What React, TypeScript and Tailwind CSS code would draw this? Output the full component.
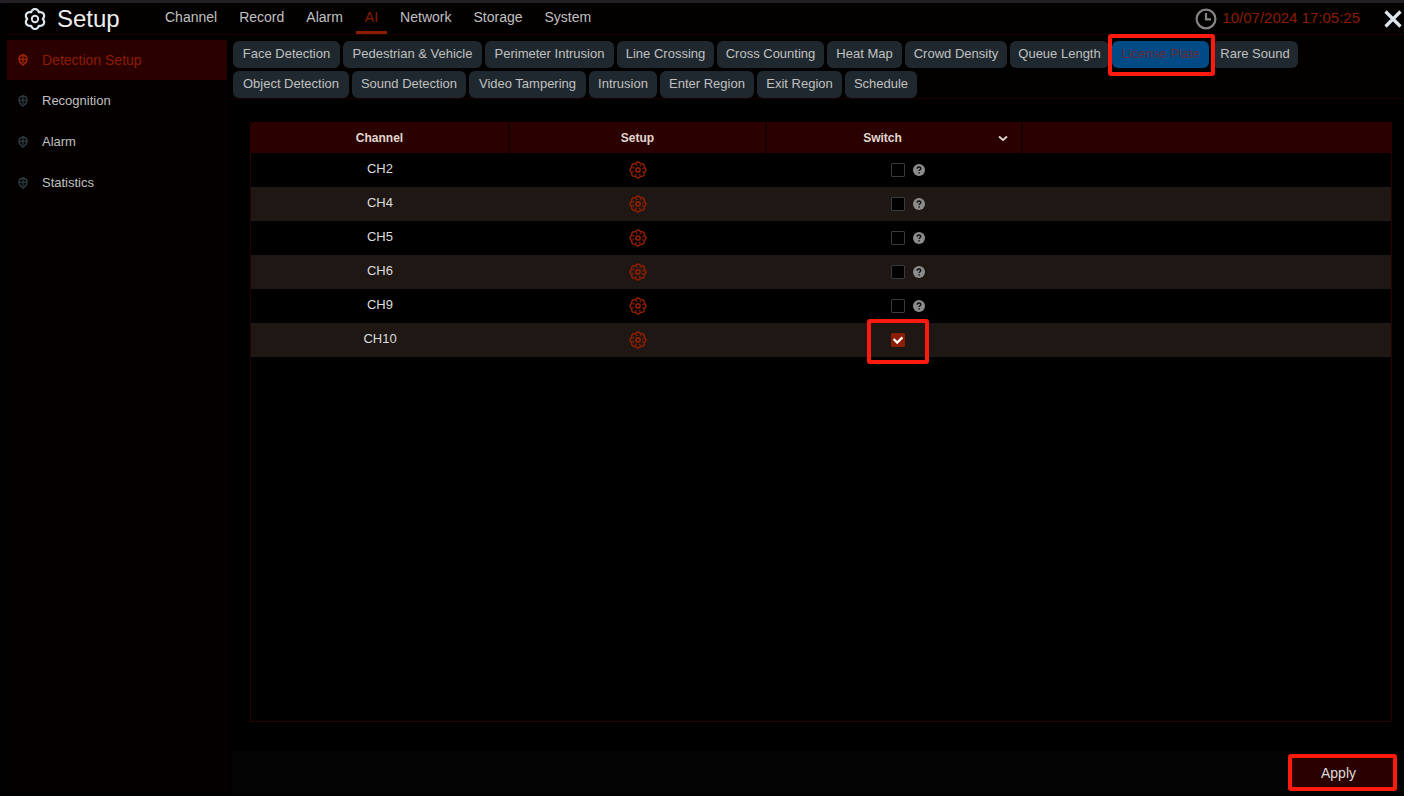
import { useState } from 'react'

const NAV = ['Channel', 'Record', 'Alarm', 'AI', 'Network', 'Storage', 'System']
const SIDEBAR = ['Detection Setup', 'Recognition', 'Alarm', 'Statistics']

const TABS = [
  [
    { name: 'Face Detection', width: 'w-[107px]' },
    { name: 'Pedestrian & Vehicle', width: 'w-[139px]' },
    { name: 'Perimeter Intrusion', width: 'w-[129px]' },
    { name: 'Line Crossing', width: 'w-[97px]' },
    { name: 'Cross Counting', width: 'w-[107px]' },
    { name: 'Heat Map', width: 'w-[75px]' },
    { name: 'Crowd Density', width: 'w-[102px]' },
    { name: 'Queue Length', width: 'w-[99px]' },
    { name: 'License Plate', width: 'w-[97px]' },
    { name: 'Rare Sound', width: 'w-[86px]' },
  ],
  [
    { name: 'Object Detection', width: 'w-[116px]' },
    { name: 'Sound Detection', width: 'w-[114px]' },
    { name: 'Video Tampering', width: 'w-[117px]' },
    { name: 'Intrusion', width: 'w-[68px]' },
    { name: 'Enter Region', width: 'w-[94px]' },
    { name: 'Exit Region', width: 'w-[85px]' },
    { name: 'Schedule', width: 'w-[72px]' },
  ],
]

const CHANNELS = ['CH2', 'CH4', 'CH5', 'CH6', 'CH9', 'CH10']

// closed outline with n rounded lobes and narrow notches between them
function lobes(c: number, r: number, depth: number, n: number) {
  const points = Array.from({ length: 96 }, (_, i) => {
    const t = (i / 96) * Math.PI * 2
    const d = r + depth * Math.abs(Math.cos((n * t) / 2))
    return `${(c + d * Math.sin(t)).toFixed(2)} ${(c - d * Math.cos(t)).toFixed(2)}`
  })
  return `M${points.join('L')}Z`
}

function SetupIcon() {
  return (
    <svg viewBox="0 0 24 24" className="size-6" fill="none" stroke="#dbe6ee" aria-hidden="true">
      <path d={lobes(12, 7.8, 2.2, 6)} strokeWidth="2.2" strokeLinejoin="round" />
      <circle cx="12" cy="12" r="3.2" strokeWidth="1.9" />
    </svg>
  )
}

function GearIcon() {
  return (
    <svg viewBox="0 0 18 18" className="size-[18px]" fill="none" stroke="currentColor" aria-hidden="true">
      <path d={lobes(9, 6.7, 1.2, 8)} strokeWidth="1.6" strokeLinejoin="round" />
      <circle cx="9" cy="9" r="5.1" strokeWidth="1.4" strokeDasharray="1.6 2.405" strokeDashoffset="2.8" />
      <circle cx="9" cy="9" r="2.1" strokeWidth="1.7" />
    </svg>
  )
}

function PinIcon() {
  return (
    <svg viewBox="0 0 10 12" className="h-3 w-[10px]" fill="none" stroke="currentColor" aria-hidden="true">
      <path d="M5 .8 8.2 2.3 9.1 5 8.2 8 5 11 1.8 8 .9 5 1.8 2.3Z" strokeWidth="1.5" />
      <path d="M5 2v7M2 5.4h6" strokeWidth="1.3" />
    </svg>
  )
}

function ClockIcon() {
  return (
    <svg viewBox="0 0 22 22" className="size-[22px]" fill="none" stroke="#858585" strokeWidth="2.2" aria-hidden="true">
      <circle cx="11" cy="11" r="9.4" />
      <path d="M11 5v6.4h5" />
    </svg>
  )
}

function HelpIcon() {
  return (
    <svg viewBox="0 0 12 12" className="size-3" aria-hidden="true">
      <circle cx="6" cy="6" r="6" fill="#8c8c8c" />
      <path d="M4.2 4.7C4.2 2.4 7.9 2.5 7.8 4.6 7.7 5.8 6.2 5.7 6.1 7" fill="none" stroke="#111" strokeWidth="1.4" />
      <circle cx="6.1" cy="8.9" r=".8" fill="#111" />
    </svg>
  )
}

// red frame drawn around the highlighted controls
function Frame({ className }: { className: string }) {
  return <span className={`pointer-events-none absolute z-10 rounded-[3px] border-4 border-[#ff1a0f] ${className}`} />
}

export default function App() {
  const [section, setSection] = useState('Detection Setup')
  const [tab, setTab] = useState('License Plate')
  const [enabled, setEnabled] = useState<string[]>(['CH10'])

  const toggle = (ch: string) => {
    setEnabled(enabled.includes(ch) ? enabled.filter(c => c !== ch) : [...enabled, ch])
  }

  return (
    <div className="flex min-h-screen flex-col border-t-[3px] border-[#231f25] bg-black font-['Liberation_Sans',sans-serif] text-[#c0c0c0]">
      {/* Top bar */}
      <header className="ml-[7px] flex h-8 items-center border-b border-[#1c0000] bg-[#030000] pl-4">
        <SetupIcon />
        <h1 className="ml-[10px] w-[97px] text-2xl leading-8 text-[#eeeeee]">Setup</h1>
        <nav className="flex h-full">
          {NAV.map(item => (
            <a
              key={item}
              href="#"
              className={`flex h-[31px] items-center border-b-[3px] text-sm ${
                item === 'AI' ? 'mx-[2px] border-[#8c1d00] px-[9px] text-[#8c1d00]' : 'mx-2 border-transparent px-[3px]'
              }`}
            >
              {item}
            </a>
          ))}
        </nav>
        <div className="ml-auto flex items-center text-[#8c1d00]">
          <ClockIcon />
          <time className="ml-[5px] text-[15px]">10/07/2024 17:05:25</time>
          <button type="button" aria-label="Close" className="ml-6 mr-[2px]">
            <svg viewBox="0 0 18 18" className="size-[18px]" stroke="#dbe6ee" strokeWidth="3.2" aria-hidden="true">
              <path d="M1.5 1.5l15 15M16.5 1.5l-15 15" />
            </svg>
          </button>
        </div>
      </header>

      <div className="flex flex-1">
        {/* Sidebar */}
        <aside className="mb-1 ml-[7px] mt-[5px] flex w-[220px] shrink-0 flex-col gap-px bg-[#040000]">
          {SIDEBAR.map(item => (
            <button
              key={item}
              type="button"
              onClick={() => setSection(item)}
              className={`flex h-10 items-center gap-[14px] pl-[11px] text-left ${
                item === section ? 'bg-[#2b0000] text-sm text-[#8c1d00]' : 'text-[13px]'
              }`}
            >
              <span className={item === section ? 'text-[#a82400]' : 'text-[#2c3c42]'}>
                <PinIcon />
              </span>
              {item}
            </button>
          ))}
        </aside>

        <main className="ml-[5px] flex min-w-0 flex-1 flex-col">
          {/* Detection type tabs */}
          <div className="flex flex-col gap-[3px] border-b border-[#1c0000] bg-[#030000] pl-px pt-[6px]">
            {TABS.map((row, i) => (
              <div key={i} className="flex gap-[3px]">
                {row.map(t => (
                  <div key={t.name} className="relative">
                    <button
                      type="button"
                      onClick={() => setTab(t.name)}
                      className={`h-[27px] whitespace-nowrap rounded-md pb-px text-[13px] ${t.width} ${
                        t.name === tab ? 'bg-[#004a86] text-[#6b2a35]' : 'bg-[#1e282e]'
                      }`}
                    >
                      {t.name}
                    </button>
                    {t.name === 'License Plate' && <Frame className="-bottom-2 -left-1 -right-[6px] -top-[7px]" />}
                  </div>
                ))}
              </div>
            ))}
          </div>

          {/* Channel table */}
          <div className="mb-[29px] ml-[18px] mr-3 mt-[23px] flex-1 border border-[#2b0000]">
            <table className="w-full table-fixed border-collapse text-[13px]">
              <colgroup>
                <col className="w-[258px]" />
                <col className="w-[257px]" />
                <col className="w-[256px]" />
                <col />
              </colgroup>
              <thead>
                <tr className="h-[30px] bg-[#2b0000] text-[#e0d8d0]">
                  <th className="border-r-2 border-[#160000] text-xs font-bold">Channel</th>
                  <th className="border-r-2 border-[#160000] text-xs font-bold">Setup</th>
                  <th className="border-r-2 border-[#160000] text-xs font-bold">
                    <button type="button" className="flex w-full items-center pr-[13px]">
                      <span className="flex-1">Switch</span>
                      <svg viewBox="0 0 10 10" className="size-[10px]" fill="none" stroke="currentColor" strokeWidth="1.8" aria-hidden="true">
                        <path d="M1 3.5l4 3.5 4-3.5" />
                      </svg>
                    </button>
                  </th>
                  <th />
                </tr>
              </thead>
              <tbody>
                {CHANNELS.map(ch => (
                  <tr key={ch} className="h-[34px] even:bg-[#1f1713]">
                    <td className="pb-[2px] text-center text-[#dcdcdc]">{ch}</td>
                    <td>
                      <button type="button" aria-label={`Setup ${ch}`} className="mx-auto block text-[#8c1d00]">
                        <GearIcon />
                      </button>
                    </td>
                    <td>
                      <div className="flex items-center gap-2 pb-px pl-[125px]">
                        <span className="relative flex">
                          <input
                            type="checkbox"
                            aria-label={`Enable ${ch}`}
                            checked={enabled.includes(ch)}
                            onChange={() => toggle(ch)}
                            className="peer size-[14px] appearance-none rounded-[1px] border border-[#3a3a3a] bg-black checked:border-[#8c1d00] checked:bg-[#8c1d00]"
                          />
                          <svg
                            viewBox="0 0 14 14"
                            className="pointer-events-none absolute inset-0 hidden size-[14px] peer-checked:block"
                            fill="none"
                            stroke="#fff"
                            strokeWidth="2.2"
                            aria-hidden="true"
                          >
                            <path d="M2.6 6l3.6 3.6 5.2-5.2" />
                          </svg>
                          {ch === 'CH10' && <Frame className="-bottom-[17px] -left-6 -right-6 -top-[14px]" />}
                        </span>
                        {ch !== 'CH10' && <HelpIcon />}
                      </div>
                    </td>
                    <td />
                  </tr>
                ))}
              </tbody>
            </table>
          </div>

          {/* Footer */}
          <footer className="mb-[2px] flex h-[43px] items-center justify-end bg-[#040404] pr-[11px]">
            <div className="relative">
              <button type="button" className="block h-[29px] w-[101px] bg-[#2b0000] pr-2 text-sm text-[#dcdcdc]">
                Apply
              </button>
              <Frame className="-inset-1" />
            </div>
          </footer>
        </main>
      </div>
    </div>
  )
}
